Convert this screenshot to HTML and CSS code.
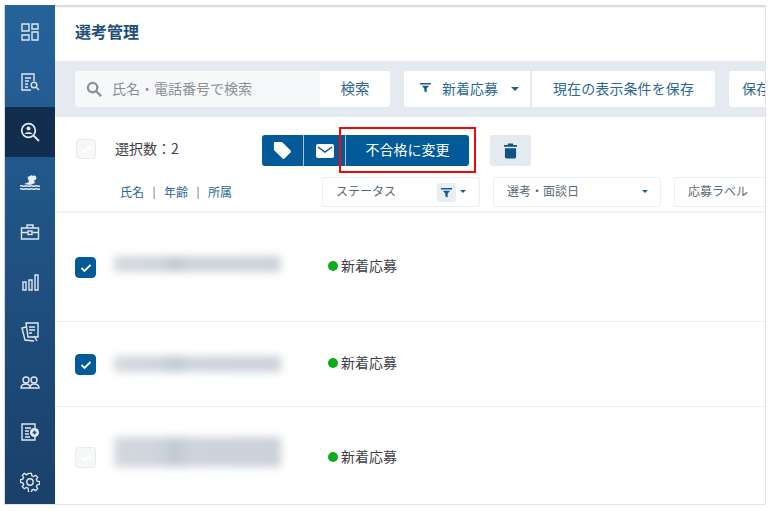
FILE: index.html
```html
<!DOCTYPE html>
<html lang="ja">
<head>
<meta charset="utf-8">
<title>選考管理</title>
<link rel="stylesheet" href="styles.css">
</head>
<body>
<div class="app">
  <nav class="side">
    <div class="nav"><svg viewBox="0 0 20 20" class="ic"><path d="M2 2h7v7H2zM12 2h6v5h-6zM12 10h6v8h-6zM2 13h7v5H2z"/></svg></div>
    <div class="nav"><svg viewBox="0 0 20 20" class="ic"><path d="M14 9V2H2v16h9M5 6h6M5 9h4M5 12h3M5 15h3"/><circle cx="14" cy="13" r="2.800"/><path d="M16 15l3 3"/></svg></div>
    <div class="nav on"><svg viewBox="0 0 20 20" class="ic ic2"><circle cx="8.500" cy="8.500" r="6.800"/><path d="M13.500 13.500l5.500 5.500"/><circle cx="8.500" cy="6.500" r="2" class="fill"/><path d="M4.500 12c.5-2.500 7.500-2.500 8 0z" class="fill"/></svg></div>
    <div class="nav"><svg viewBox="0 0 20 20" class="ic"><circle cx="14" cy="6" r="2.400" class="fill"/><path d="M4 12l5-2-1.500-5L12 3l3 8-5 2z" class="fill"/><path d="M0 14c2-1 3 1 5 0s3 1 5 0 3 1 5 0 3 1 5 0M0 17c2-1 3 1 5 0s3 1 5 0 3 1 5 0 3 1 5 0"/></svg></div>
    <div class="nav"><svg viewBox="0 0 20 20" class="ic"><path d="M1.500 6h17v11h-17zM7 6V3h6v3M1.500 10.500h6M12.500 10.500h6"/><rect x="8" y="9" width="4" height="3.500"/></svg></div>
    <div class="nav"><svg viewBox="0 0 20 20" class="ic"><path d="M3 10h3v8H3zM9 8h3v10H9zM15 3h3v15h-3z"/></svg></div>
    <div class="nav"><svg viewBox="0 0 20 20" class="ic"><path d="M6 1h12v14H8zM9 5h6M9 8h6M9 11h3M6 5L2 6l3 12 9 1"/><path d="M14 14l3 5"/></svg></div>
    <div class="nav"><svg viewBox="0 0 20 20" class="ic"><circle cx="6" cy="8" r="3"/><circle cx="14" cy="8" r="3"/><path d="M1 16c0-2.500 2-4 5-4s4 1.500 4 4zM10 16c0-2.500 1-4 4-4s5 1.500 5 4z"/></svg></div>
    <div class="nav"><svg viewBox="0 0 20 20" class="ic"><path d="M15 6V2H2v16h13v-3M5 6h6M5 9h4M5 12h4M5 15h5"/><circle cx="14.500" cy="10.500" r="4.500" class="fill"/><path d="M12.500 10.500h4M14.500 8.500v4" class="cut"/></svg></div>
    <div class="nav"><svg viewBox="0 0 20 20" class="ic"><circle cx="10" cy="10" r="3.200"/><path d="M8.500 1h3l.5 2.500 1.800.8 2.200-1.400 2.100 2.100-1.400 2.200.8 1.800 2.500.5v3l-2.500.5-.8 1.800 1.400 2.200-2.100 2.100-2.200-1.400-1.800.8-.5 2.500h-3L8 16.500l-1.800-.8L4 17.100 1.900 15l1.400-2.200-.8-1.800L0 10.500v-3l2.500-.5.800-1.800L1.900 3 4 .9l2.200 1.400L8 1.500z" transform="translate(.5 .5) scale(.95)"/></svg></div>
  </nav>
  <main class="main">
    <h1 class="title">選考管理</h1>
    <div class="bar">
      <div class="search">
        <svg viewBox="0 0 18 18" class="mag"><circle cx="7" cy="7" r="5"/><path d="M11 11l5 5"/></svg>
        <span>氏名・電話番号で検索</span>
      </div>
      <div class="btn go">検索</div>
      <div class="btn news">
        <svg viewBox="0 0 12 12" class="fun"><path d="M0 1h12v1.800H0zM2 4h8L7.300 7v4.500L4.700 10V7z"/></svg>
        <span>新着応募</span><i class="caret"></i>
      </div>
      <div class="btn keep">現在の表示条件を保存</div>
      <div class="btn more">保存</div>
    </div>
    <div class="head">
      <div class="sel">
        <span class="box"><svg viewBox="0 0 12 10"><path d="M1.500 5l3 3 6-6"/></svg></span>
        <span class="count">選択数：2</span>
        <div class="acts">
          <span class="act tag"><svg viewBox="0 0 20 20" class="w"><path d="M1 1h8.500l9 9a1.500 1.500 0 0 1 0 2l-6.500 6.500a1.500 1.500 0 0 1-2 0l-9-9z"/></svg></span>
          <span class="act mail"><svg viewBox="0 0 18 14" class="mailic"><path d="M2 0h14a2 2 0 0 1 2 2v10a2 2 0 0 1-2 2H2a2 2 0 0 1-2-2V2a2 2 0 0 1 2-2z"/><path d="M2 3l7 5 7-5" class="fold"/></svg></span>
          <span class="act change">不合格に変更</span>
        </div>
        <span class="trash"><svg viewBox="0 0 14 16"><path d="M4.500 0h5l.5 1.500h4V3.500H0V1.500h4zM1 5h12v9.500a1.500 1.500 0 0 1-1.500 1.500h-9A1.500 1.500 0 0 1 1 14.500z"/></svg></span>
        <span class="mark"></span>
      </div>
      <div class="cols">
        <div class="links"><span>氏名</span><b>|</b><span>年齢</span><b>|</b><span>所属</span></div>
        <div class="drop d1"><span>ステータス</span><span class="fchip"><svg viewBox="0 0 12 12"><path d="M0 1h12v1.800H0zM2 4h8L7.300 7v4.500L4.700 10V7z"/></svg></span><i class="caret small"></i></div>
        <div class="drop d2"><span>選考・面談日</span><i class="caret small"></i></div>
        <div class="drop d3"><span>応募ラベル</span></div>
      </div>
    </div>
    <div class="row r1">
      <span class="box on"><svg viewBox="0 0 12 10"><path d="M1.500 5l3 3 6-6"/></svg></span>
      <span class="blur b1"></span>
      <span class="status"><i class="dot"></i>新着応募</span>
    </div>
    <div class="row r2">
      <span class="box on"><svg viewBox="0 0 12 10"><path d="M1.500 5l3 3 6-6"/></svg></span>
      <span class="blur b2"></span>
      <span class="status"><i class="dot"></i>新着応募</span>
    </div>
    <div class="row r3">
      <span class="box"><svg viewBox="0 0 12 10"><path d="M1.500 5l3 3 6-6"/></svg></span>
      <span class="blur b3"></span>
      <span class="status"><i class="dot"></i>新着応募</span>
    </div>
  </main>
</div>
</body>
</html>
```

FILE: styles.css
```css
* { box-sizing: border-box; }
html, body { margin: 0; padding: 0; background: #fff; }
body {
  width: 773px;
  height: 511px;
  overflow: hidden;
  font-family: "Noto Sans CJK JP", "Noto Sans", sans-serif;
  padding: 5px 7px 6px 4px;
}
.app {
  display: flex;
  width: 762px;
  height: 500px;
  border-right: 1px solid #e2e3e5;
  border-bottom: 1px solid #e2e3e5;
  border-left: 1px solid #d8d9db;
  overflow: hidden;
}
.side {
  width: 50px;
  flex: none;
  display: flex;
  flex-direction: column;
  padding-top: 2px;
  background: linear-gradient(180deg, #25639b 0%, #1a4069 100%);
}
.nav {
  height: 50px;
  flex: none;
  display: flex;
  align-items: center;
  justify-content: center;
}
.nav.on { background: #132d4e; }
.ic { width: 20px; height: 20px; fill: none; stroke: #dfe8f0; stroke-width: 1.400; }
.ic2 { stroke-width: 1.800; }
.ic .fill { fill: #e6edf3; stroke: none; }
.ic .cut { stroke: #23588a; stroke-width: 1.600; }
.main {
  flex: 1;
  min-width: 0;
  overflow: hidden;
  position: relative;
  box-shadow: inset 0 3px 2px -1px #d4d5d7;
}
.title {
  margin: 0;
  height: 56px;
  padding: 16px 0 0 20px;
  font-size: 16px;
  line-height: 20px;
  font-weight: 700;
  color: #1d4f7a;
}
.bar {
  height: 56px;
  background: #e4eaf0;
  padding: 10px 0 10px 20px;
  display: flex;
  white-space: nowrap;
}
.search {
  width: 245px;
  flex: none;
  background: #f7f8f9;
  border-radius: 3px 0 0 3px;
  display: flex;
  align-items: center;
  padding: 0 0 2px 11px;
  gap: 9px;
  font-size: 14px;
  color: #8a9097;
}
.mag { width: 17px; height: 17px; fill: none; stroke: #8d8f92; stroke-width: 2.400; margin-top: 2px; }
.btn {
  background: #fff;
  display: flex;
  align-items: center;
  justify-content: center;
  flex: none;
  padding-bottom: 3px;
  font-size: 14px;
  color: #2a6794;
}
.go { width: 70px; border-radius: 0 3px 3px 0; margin-right: 14px; font-size: 14.500px; }
.news {
  width: 126px;
  border-radius: 3px 0 0 3px;
  margin-right: 2px;
  justify-content: flex-start;
  padding-left: 16px;
}
.news .fun { width: 11px; height: 11px; fill: #1d5a8c; margin-right: 11px; }
.news .caret { margin-left: 13px; margin-top: 3px; }
.keep { width: 183px; border-radius: 0 3px 3px 0; margin-right: 14px; letter-spacing: .1px; }
.more { width: 100px; border-radius: 3px; justify-content: flex-start; padding-left: 13px; }
.caret {
  display: inline-block;
  width: 0;
  height: 0;
  border-left: 4px solid transparent;
  border-right: 4px solid transparent;
  border-top: 4px solid #1d5a8c;
}
.caret.small { border-left-width: 3.500px; border-right-width: 3.500px; border-top-width: 3px; }
.head { height: 96px; border-bottom: 2px solid #f1f2f3; position: relative; }
.sel {
  height: 60px;
  padding: 18px 0 0 21px;
  display: flex;
  align-items: flex-start;
  position: relative;
}
.box {
  width: 20px;
  height: 20px;
  flex: none;
  border: 1px solid #e9eaeb;
  border-radius: 4px;
  background: #f6f7f7;
  display: flex;
  align-items: center;
  justify-content: center;
}
.sel .box { margin-top: 4px; }
.box.on { background: #035a98; border-color: #035a98; }
.box svg { width: 12px; height: 10px; fill: none; stroke: #fff; stroke-width: 1.800; }
.count {
  margin-left: 19px;
  width: 147px;
  font-size: 14px;
  line-height: 20px;
  margin-top: 3px;
  color: #3e4348;
  flex: none;
}
.acts {
  display: flex;
  height: 31px;
  width: 207px;
  flex: none;
  background: #035a98;
  border-radius: 3px;
  overflow: hidden;
}
.act {
  display: flex;
  align-items: center;
  justify-content: center;
  color: #fff;
  font-size: 14px;
  border-right: 1px solid #a9c4da;
}
.tag { width: 42px; }
.mail { width: 42px; }
.change { flex: 1; border-right: 0; padding-bottom: 4px; }
.w { width: 19px; height: 19px; fill: #fff; }
.mailic { width: 18px; height: 14px; fill: #fff; }
.mailic .fold { fill: none; stroke: #035a98; stroke-width: 1.500; }
.trash {
  width: 41px;
  height: 31px;
  margin-left: 21px;
  flex: none;
  background: #e4eaf0;
  border-radius: 3px;
  display: flex;
  align-items: center;
  justify-content: center;
}
.trash svg { width: 13px; height: 16px; fill: #0e5288; }
.mark {
  position: absolute;
  left: 284px;
  top: 10px;
  width: 137px;
  height: 46px;
  border: 2px solid #f00808;
}
.cols { display: flex; align-items: center; height: 30px; }
.links {
  width: 267px;
  flex: none;
  padding: 0 0 2px 65px;
  display: flex;
  align-items: center;
  font-size: 12px;
  color: #2a6794;
  white-space: nowrap;
}
.links b { font-weight: 400; margin: 0 8.500px; font-size: 11px; }
.drop {
  height: 30px;
  flex: none;
  border: 1px solid #eceef0;
  border-radius: 3px;
  display: flex;
  align-items: center;
  padding: 0 0 4px 13px;
  font-size: 12px;
  color: #596a78;
  white-space: nowrap;
}
.d1 { width: 158px; margin-right: 13px; }
.d1 .fchip {
  width: 19px;
  height: 19px;
  margin: 4px 4px 0 41px;
  background: #e9eef2;
  border-radius: 3px;
  display: flex;
  align-items: center;
  justify-content: center;
}
.d1 .caret { margin-top: 3px; }
.d2 .caret { margin-top: 3px; }
.fchip svg { width: 11px; height: 11px; fill: #1d5a8c; }
.d2 { width: 168px; margin-right: 13px; }
.d2 .caret { margin-left: 63px; }
.d3 { width: 100px; }
.row {
  display: flex;
  align-items: flex-start;
  position: relative;
  padding-left: 20px;
  border-bottom: 1px solid #ebecee;
}
.r1 { height: 109px; }
.r2 { height: 85px; }
.r3 { height: 98px; border-bottom: 0; }
.row .box { width: 21px; height: 21px; }
.r1 .box { margin-top: 44px; }
.r2 .box { margin-top: 32px; }
.r3 .box { margin-top: 40px; }
.blur {
  width: 167px;
  margin-left: 18px;
  flex: none;
  background: linear-gradient(90deg, #d3d8de 0%, #ced4db 28%, #bfc8d1 36%, #ced4db 46%, #cbd1d8 100%);
  filter: blur(4px);
}
.b1 { height: 16px; margin-top: 43px; }
.b2 { height: 16px; margin-top: 34px; }
.b3 { height: 30px; margin-top: 30px; }
.status {
  margin-left: 47px;
  font-size: 14px;
  line-height: 20px;
  color: #3b4045;
  display: flex;
  align-items: center;
  gap: 3px;
  white-space: nowrap;
}
.r1 .status { margin-top: 42px; }
.r2 .status { margin-top: 30px; }
.r3 .status { margin-top: 39px; }
.dot { width: 10px; height: 10px; border-radius: 50%; background: #0aad1c; margin-top: 2px; }
```
